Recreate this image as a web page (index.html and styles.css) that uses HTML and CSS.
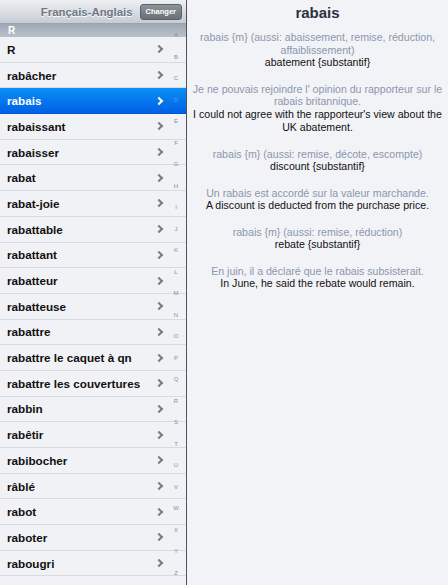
FILE: index.html
```html
<!DOCTYPE html>
<html lang="fr">
<head>
  <meta charset="UTF-8" />
  <title>Français-Anglais</title>
  <link rel="stylesheet" href="styles.css">
</head>
<body>
  <div class="master">
    <div class="nav-bar">
      <span class="nav-title">Français-Anglais</span>
      <button class="nav-btn">Changer</button>
    </div>
    <div class="section-header">R</div>
    <ul class="word-list">
      <li class="row">R</li>
      <li class="row">rabâcher</li>
      <li class="row selected">rabais</li>
      <li class="row">rabaissant</li>
      <li class="row">rabaisser</li>
      <li class="row">rabat</li>
      <li class="row">rabat-joie</li>
      <li class="row">rabattable</li>
      <li class="row">rabattant</li>
      <li class="row">rabatteur</li>
      <li class="row">rabatteuse</li>
      <li class="row">rabattre</li>
      <li class="row">rabattre le caquet à qn</li>
      <li class="row">rabattre les couvertures</li>
      <li class="row">rabbin</li>
      <li class="row">rabêtir</li>
      <li class="row">rabibocher</li>
      <li class="row">râblé</li>
      <li class="row">rabot</li>
      <li class="row">raboter</li>
      <li class="row">rabougri</li>
    </ul>
    <div class="index-bar">
      <span>A</span><span>B</span><span>C</span><span class="on-sel">D</span><span>E</span><span>F</span>
      <span>G</span><span>H</span><span>I</span><span>J</span><span>K</span><span>L</span>
      <span>M</span><span>N</span><span>O</span><span>P</span><span>Q</span><span>R</span>
      <span>S</span><span>T</span><span>U</span><span>V</span><span>W</span><span>X</span>
      <span>Y</span><span>Z</span>
    </div>
  </div>

  <div class="detail">
    <h1>rabais</h1>
    <div class="entry">
      <p class="src">rabais {m} (aussi: abaissement, remise, réduction, affaiblissement)</p>
      <p class="tr">abatement {substantif}</p>
    </div>
    <div class="entry">
      <p class="src">Je ne pouvais rejoindre l' opinion du rapporteur sur le rabais britannique.</p>
      <p class="tr">I could not agree with the rapporteur's view about the UK abatement.</p>
    </div>
    <div class="entry">
      <p class="src">rabais {m} (aussi: remise, décote, escompte)</p>
      <p class="tr">discount {substantif}</p>
    </div>
    <div class="entry">
      <p class="src">Un rabais est accordé sur la valeur marchande.</p>
      <p class="tr">A discount is deducted from the purchase price.</p>
    </div>
    <div class="entry">
      <p class="src">rabais {m} (aussi: remise, réduction)</p>
      <p class="tr">rebate {substantif}</p>
    </div>
    <div class="entry">
      <p class="src">En juin, il a déclaré que le rabais subsisterait.</p>
      <p class="tr">In June, he said the rebate would remain.</p>
    </div>
  </div>
</body>
</html>
```

FILE: styles.css
```css
* {
  box-sizing: border-box;
  padding: 0;
  margin: 0;
}

body {
  font-family: 'Liberation Sans', Arial, sans-serif;
  display: flex;
  width: 448px;
  height: 585px;
  overflow: hidden;
  background: #f2f3f7;
}

.master {
  position: relative;
  width: 187px;
  flex-shrink: 0;
  border-right: 1px solid #505257;
  background: #f1f2f6;
}

.nav-bar {
  height: 24px;
  display: flex;
  align-items: center;
  justify-content: flex-end;
  gap: 7px;
  padding: 0 4px 0 0;
  background: linear-gradient(#eef0f3, #c6ccd4);
  border-bottom: 1px solid #9aa3ad;
}

.nav-title {
  font-size: 11.4px;
  font-weight: bold;
  color: #6e7784;
  text-shadow: 0 1px 0 #fff;
}

.nav-btn {
  font-family: inherit;
  font-size: 7.5px;
  font-weight: bold;
  color: #fff;
  background: linear-gradient(#8d939b, #6a7078);
  border: 1px solid #5d636b;
  border-radius: 3px;
  padding: 0 5px;
  height: 16px;
}

.section-header {
  height: 13px;
  line-height: 13px;
  padding-left: 8px;
  font-size: 10px;
  font-weight: bold;
  color: #fff;
  background: linear-gradient(#9ea9b6, #b8c0ca);
}

.word-list {
  list-style: none;
}

.row {
  height: 25.7px;
  display: flex;
  align-items: center;
  padding-left: 7px;
  font-size: 11.7px;
  font-weight: bold;
  color: #111;
  border-bottom: 1px solid #d8dae0;
  position: relative;
}

.row::after {
  content: '';
  position: absolute;
  left: 156px;
  top: 50%;
  width: 4px;
  height: 4px;
  margin-top: -3px;
  border-right: 2px solid #7b7d82;
  border-top: 2px solid #7b7d82;
  transform: rotate(45deg);
}

.row.selected {
  color: #fff;
  background: linear-gradient(#0a8ff6, #0160e4);
  border-bottom-color: #0158d6;
}

.row.selected::after {
  border-color: #fff;
}

.index-bar {
  position: absolute;
  top: 25px;
  left: 168px;
  width: 16px;
  display: flex;
  flex-direction: column;
  align-items: center;
}

.index-bar span {
  height: 21.52px;
  line-height: 21.52px;
  font-size: 6px;
  color: #8c8e94;
}

.index-bar .on-sel {
  color: #5b9cf0;
}

.detail {
  flex: 1;
  padding: 4px 3px 0 3px;
  text-align: center;
  font-size: 10.6px;
  line-height: 12.5px;
}

.detail h1 {
  font-size: 15px;
  line-height: 18px;
  color: #2a3142;
  margin-bottom: 9px;
}

.entry {
  margin-bottom: 13px;
}

.src {
  color: #8a97ad;
}

.tr {
  color: #111;
  line-height: 13.5px;
}
```
